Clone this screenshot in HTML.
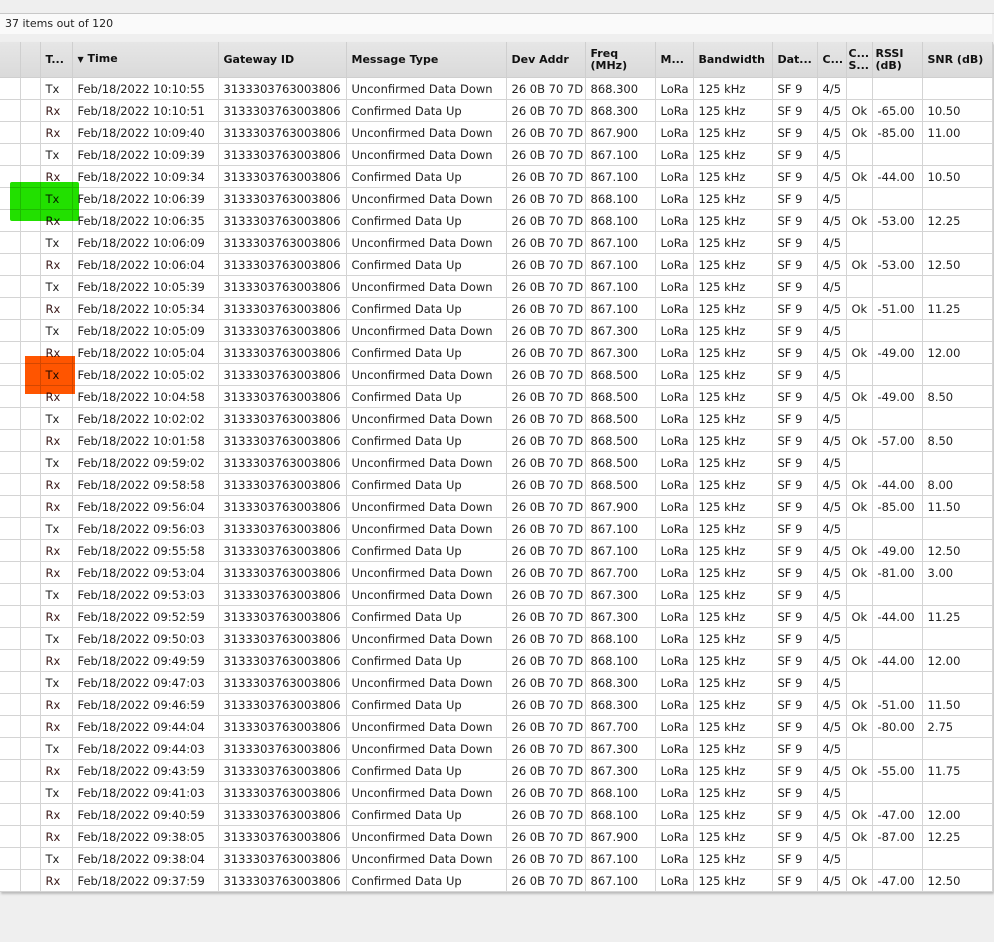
<!DOCTYPE html>
<html><head><meta charset="utf-8"><style>
html,body{margin:0;padding:0;background:#efefef;width:994px;height:942px;overflow:hidden;font-family:"DejaVu Sans","Liberation Sans",sans-serif;}
.top{position:absolute;left:0;top:0;width:994px;height:13px;background:#efefef;border-bottom:1px solid #c8c8c8;}
.status{position:absolute;left:0;top:14px;width:992px;height:20px;background:#fafafa;font-size:11px;line-height:20px;padding-left:5px;box-sizing:border-box;color:#222;}
table{position:absolute;left:0;top:42px;border-collapse:collapse;table-layout:fixed;width:992px;background:#fff;box-shadow:1px 2px 2px #bbb;font-size:11.5px;color:#222;}
th{height:35px;padding:0 5px;background:linear-gradient(#e6e6e6,#dadada);border:1px solid #cfcfcf;border-top:none;text-align:left;font-weight:bold;font-size:11px;line-height:12px;white-space:nowrap;overflow:hidden;color:#111;}
td{height:21px;padding:0 5px;border:1px solid #d4d4d4;white-space:nowrap;overflow:hidden;}
td:first-child,th:first-child{border-left:none}
.rx{color:#3a1a1a}
.hl{position:absolute;}
</style></head><body>
<div class="top"></div>
<div class="status">37 items out of 120</div>
<table>
<colgroup><col style="width:20px"><col style="width:20px"><col style="width:32px"><col style="width:146px"><col style="width:128px"><col style="width:160px"><col style="width:79px"><col style="width:70px"><col style="width:38px"><col style="width:79px"><col style="width:45px"><col style="width:29px"><col style="width:26px"><col style="width:50px"><col style="width:70px"></colgroup>
<tr><th></th><th></th><th>T...</th><th><span style="font-size:8px">&#9660;</span> Time</th><th>Gateway ID</th><th>Message Type</th><th>Dev Addr</th><th>Freq<br>(MHz)</th><th>M...</th><th>Bandwidth</th><th>Dat...</th><th>C...</th><th style="padding:0 2px">C...<br>S...</th><th style="padding:0 3px">RSSI<br>(dB)</th><th>SNR (dB)</th></tr>
<tbody id="b">
<tr><td></td><td></td><td>Tx</td><td>Feb/18/2022 10:10:55</td><td>3133303763003806</td><td>Unconfirmed Data Down</td><td>26 0B 70 7D</td><td>868.300</td><td>LoRa</td><td>125 kHz</td><td>SF 9</td><td>4/5</td><td></td><td></td><td></td></tr>
<tr><td></td><td></td><td class="rx">Rx</td><td>Feb/18/2022 10:10:51</td><td>3133303763003806</td><td>Confirmed Data Up</td><td>26 0B 70 7D</td><td>868.300</td><td>LoRa</td><td>125 kHz</td><td>SF 9</td><td>4/5</td><td>Ok</td><td>-65.00</td><td>10.50</td></tr>
<tr><td></td><td></td><td class="rx">Rx</td><td>Feb/18/2022 10:09:40</td><td>3133303763003806</td><td>Unconfirmed Data Down</td><td>26 0B 70 7D</td><td>867.900</td><td>LoRa</td><td>125 kHz</td><td>SF 9</td><td>4/5</td><td>Ok</td><td>-85.00</td><td>11.00</td></tr>
<tr><td></td><td></td><td>Tx</td><td>Feb/18/2022 10:09:39</td><td>3133303763003806</td><td>Unconfirmed Data Down</td><td>26 0B 70 7D</td><td>867.100</td><td>LoRa</td><td>125 kHz</td><td>SF 9</td><td>4/5</td><td></td><td></td><td></td></tr>
<tr><td></td><td></td><td class="rx">Rx</td><td>Feb/18/2022 10:09:34</td><td>3133303763003806</td><td>Confirmed Data Up</td><td>26 0B 70 7D</td><td>867.100</td><td>LoRa</td><td>125 kHz</td><td>SF 9</td><td>4/5</td><td>Ok</td><td>-44.00</td><td>10.50</td></tr>
<tr><td></td><td></td><td>Tx</td><td>Feb/18/2022 10:06:39</td><td>3133303763003806</td><td>Unconfirmed Data Down</td><td>26 0B 70 7D</td><td>868.100</td><td>LoRa</td><td>125 kHz</td><td>SF 9</td><td>4/5</td><td></td><td></td><td></td></tr>
<tr><td></td><td></td><td class="rx">Rx</td><td>Feb/18/2022 10:06:35</td><td>3133303763003806</td><td>Confirmed Data Up</td><td>26 0B 70 7D</td><td>868.100</td><td>LoRa</td><td>125 kHz</td><td>SF 9</td><td>4/5</td><td>Ok</td><td>-53.00</td><td>12.25</td></tr>
<tr><td></td><td></td><td>Tx</td><td>Feb/18/2022 10:06:09</td><td>3133303763003806</td><td>Unconfirmed Data Down</td><td>26 0B 70 7D</td><td>867.100</td><td>LoRa</td><td>125 kHz</td><td>SF 9</td><td>4/5</td><td></td><td></td><td></td></tr>
<tr><td></td><td></td><td class="rx">Rx</td><td>Feb/18/2022 10:06:04</td><td>3133303763003806</td><td>Confirmed Data Up</td><td>26 0B 70 7D</td><td>867.100</td><td>LoRa</td><td>125 kHz</td><td>SF 9</td><td>4/5</td><td>Ok</td><td>-53.00</td><td>12.50</td></tr>
<tr><td></td><td></td><td>Tx</td><td>Feb/18/2022 10:05:39</td><td>3133303763003806</td><td>Unconfirmed Data Down</td><td>26 0B 70 7D</td><td>867.100</td><td>LoRa</td><td>125 kHz</td><td>SF 9</td><td>4/5</td><td></td><td></td><td></td></tr>
<tr><td></td><td></td><td class="rx">Rx</td><td>Feb/18/2022 10:05:34</td><td>3133303763003806</td><td>Confirmed Data Up</td><td>26 0B 70 7D</td><td>867.100</td><td>LoRa</td><td>125 kHz</td><td>SF 9</td><td>4/5</td><td>Ok</td><td>-51.00</td><td>11.25</td></tr>
<tr><td></td><td></td><td>Tx</td><td>Feb/18/2022 10:05:09</td><td>3133303763003806</td><td>Unconfirmed Data Down</td><td>26 0B 70 7D</td><td>867.300</td><td>LoRa</td><td>125 kHz</td><td>SF 9</td><td>4/5</td><td></td><td></td><td></td></tr>
<tr><td></td><td></td><td class="rx">Rx</td><td>Feb/18/2022 10:05:04</td><td>3133303763003806</td><td>Confirmed Data Up</td><td>26 0B 70 7D</td><td>867.300</td><td>LoRa</td><td>125 kHz</td><td>SF 9</td><td>4/5</td><td>Ok</td><td>-49.00</td><td>12.00</td></tr>
<tr><td></td><td></td><td>Tx</td><td>Feb/18/2022 10:05:02</td><td>3133303763003806</td><td>Unconfirmed Data Down</td><td>26 0B 70 7D</td><td>868.500</td><td>LoRa</td><td>125 kHz</td><td>SF 9</td><td>4/5</td><td></td><td></td><td></td></tr>
<tr><td></td><td></td><td class="rx">Rx</td><td>Feb/18/2022 10:04:58</td><td>3133303763003806</td><td>Confirmed Data Up</td><td>26 0B 70 7D</td><td>868.500</td><td>LoRa</td><td>125 kHz</td><td>SF 9</td><td>4/5</td><td>Ok</td><td>-49.00</td><td>8.50</td></tr>
<tr><td></td><td></td><td>Tx</td><td>Feb/18/2022 10:02:02</td><td>3133303763003806</td><td>Unconfirmed Data Down</td><td>26 0B 70 7D</td><td>868.500</td><td>LoRa</td><td>125 kHz</td><td>SF 9</td><td>4/5</td><td></td><td></td><td></td></tr>
<tr><td></td><td></td><td class="rx">Rx</td><td>Feb/18/2022 10:01:58</td><td>3133303763003806</td><td>Confirmed Data Up</td><td>26 0B 70 7D</td><td>868.500</td><td>LoRa</td><td>125 kHz</td><td>SF 9</td><td>4/5</td><td>Ok</td><td>-57.00</td><td>8.50</td></tr>
<tr><td></td><td></td><td>Tx</td><td>Feb/18/2022 09:59:02</td><td>3133303763003806</td><td>Unconfirmed Data Down</td><td>26 0B 70 7D</td><td>868.500</td><td>LoRa</td><td>125 kHz</td><td>SF 9</td><td>4/5</td><td></td><td></td><td></td></tr>
<tr><td></td><td></td><td class="rx">Rx</td><td>Feb/18/2022 09:58:58</td><td>3133303763003806</td><td>Confirmed Data Up</td><td>26 0B 70 7D</td><td>868.500</td><td>LoRa</td><td>125 kHz</td><td>SF 9</td><td>4/5</td><td>Ok</td><td>-44.00</td><td>8.00</td></tr>
<tr><td></td><td></td><td class="rx">Rx</td><td>Feb/18/2022 09:56:04</td><td>3133303763003806</td><td>Unconfirmed Data Down</td><td>26 0B 70 7D</td><td>867.900</td><td>LoRa</td><td>125 kHz</td><td>SF 9</td><td>4/5</td><td>Ok</td><td>-85.00</td><td>11.50</td></tr>
<tr><td></td><td></td><td>Tx</td><td>Feb/18/2022 09:56:03</td><td>3133303763003806</td><td>Unconfirmed Data Down</td><td>26 0B 70 7D</td><td>867.100</td><td>LoRa</td><td>125 kHz</td><td>SF 9</td><td>4/5</td><td></td><td></td><td></td></tr>
<tr><td></td><td></td><td class="rx">Rx</td><td>Feb/18/2022 09:55:58</td><td>3133303763003806</td><td>Confirmed Data Up</td><td>26 0B 70 7D</td><td>867.100</td><td>LoRa</td><td>125 kHz</td><td>SF 9</td><td>4/5</td><td>Ok</td><td>-49.00</td><td>12.50</td></tr>
<tr><td></td><td></td><td class="rx">Rx</td><td>Feb/18/2022 09:53:04</td><td>3133303763003806</td><td>Unconfirmed Data Down</td><td>26 0B 70 7D</td><td>867.700</td><td>LoRa</td><td>125 kHz</td><td>SF 9</td><td>4/5</td><td>Ok</td><td>-81.00</td><td>3.00</td></tr>
<tr><td></td><td></td><td>Tx</td><td>Feb/18/2022 09:53:03</td><td>3133303763003806</td><td>Unconfirmed Data Down</td><td>26 0B 70 7D</td><td>867.300</td><td>LoRa</td><td>125 kHz</td><td>SF 9</td><td>4/5</td><td></td><td></td><td></td></tr>
<tr><td></td><td></td><td class="rx">Rx</td><td>Feb/18/2022 09:52:59</td><td>3133303763003806</td><td>Confirmed Data Up</td><td>26 0B 70 7D</td><td>867.300</td><td>LoRa</td><td>125 kHz</td><td>SF 9</td><td>4/5</td><td>Ok</td><td>-44.00</td><td>11.25</td></tr>
<tr><td></td><td></td><td>Tx</td><td>Feb/18/2022 09:50:03</td><td>3133303763003806</td><td>Unconfirmed Data Down</td><td>26 0B 70 7D</td><td>868.100</td><td>LoRa</td><td>125 kHz</td><td>SF 9</td><td>4/5</td><td></td><td></td><td></td></tr>
<tr><td></td><td></td><td class="rx">Rx</td><td>Feb/18/2022 09:49:59</td><td>3133303763003806</td><td>Confirmed Data Up</td><td>26 0B 70 7D</td><td>868.100</td><td>LoRa</td><td>125 kHz</td><td>SF 9</td><td>4/5</td><td>Ok</td><td>-44.00</td><td>12.00</td></tr>
<tr><td></td><td></td><td>Tx</td><td>Feb/18/2022 09:47:03</td><td>3133303763003806</td><td>Unconfirmed Data Down</td><td>26 0B 70 7D</td><td>868.300</td><td>LoRa</td><td>125 kHz</td><td>SF 9</td><td>4/5</td><td></td><td></td><td></td></tr>
<tr><td></td><td></td><td class="rx">Rx</td><td>Feb/18/2022 09:46:59</td><td>3133303763003806</td><td>Confirmed Data Up</td><td>26 0B 70 7D</td><td>868.300</td><td>LoRa</td><td>125 kHz</td><td>SF 9</td><td>4/5</td><td>Ok</td><td>-51.00</td><td>11.50</td></tr>
<tr><td></td><td></td><td class="rx">Rx</td><td>Feb/18/2022 09:44:04</td><td>3133303763003806</td><td>Unconfirmed Data Down</td><td>26 0B 70 7D</td><td>867.700</td><td>LoRa</td><td>125 kHz</td><td>SF 9</td><td>4/5</td><td>Ok</td><td>-80.00</td><td>2.75</td></tr>
<tr><td></td><td></td><td>Tx</td><td>Feb/18/2022 09:44:03</td><td>3133303763003806</td><td>Unconfirmed Data Down</td><td>26 0B 70 7D</td><td>867.300</td><td>LoRa</td><td>125 kHz</td><td>SF 9</td><td>4/5</td><td></td><td></td><td></td></tr>
<tr><td></td><td></td><td class="rx">Rx</td><td>Feb/18/2022 09:43:59</td><td>3133303763003806</td><td>Confirmed Data Up</td><td>26 0B 70 7D</td><td>867.300</td><td>LoRa</td><td>125 kHz</td><td>SF 9</td><td>4/5</td><td>Ok</td><td>-55.00</td><td>11.75</td></tr>
<tr><td></td><td></td><td>Tx</td><td>Feb/18/2022 09:41:03</td><td>3133303763003806</td><td>Unconfirmed Data Down</td><td>26 0B 70 7D</td><td>868.100</td><td>LoRa</td><td>125 kHz</td><td>SF 9</td><td>4/5</td><td></td><td></td><td></td></tr>
<tr><td></td><td></td><td class="rx">Rx</td><td>Feb/18/2022 09:40:59</td><td>3133303763003806</td><td>Confirmed Data Up</td><td>26 0B 70 7D</td><td>868.100</td><td>LoRa</td><td>125 kHz</td><td>SF 9</td><td>4/5</td><td>Ok</td><td>-47.00</td><td>12.00</td></tr>
<tr><td></td><td></td><td class="rx">Rx</td><td>Feb/18/2022 09:38:05</td><td>3133303763003806</td><td>Unconfirmed Data Down</td><td>26 0B 70 7D</td><td>867.900</td><td>LoRa</td><td>125 kHz</td><td>SF 9</td><td>4/5</td><td>Ok</td><td>-87.00</td><td>12.25</td></tr>
<tr><td></td><td></td><td>Tx</td><td>Feb/18/2022 09:38:04</td><td>3133303763003806</td><td>Unconfirmed Data Down</td><td>26 0B 70 7D</td><td>867.100</td><td>LoRa</td><td>125 kHz</td><td>SF 9</td><td>4/5</td><td></td><td></td><td></td></tr>
<tr><td></td><td></td><td class="rx">Rx</td><td>Feb/18/2022 09:37:59</td><td>3133303763003806</td><td>Confirmed Data Up</td><td>26 0B 70 7D</td><td>867.100</td><td>LoRa</td><td>125 kHz</td><td>SF 9</td><td>4/5</td><td>Ok</td><td>-47.00</td><td>12.50</td></tr>
</tbody></table>
<div class="hl" style="left:10px;top:182px;width:69px;height:39px;background:#22e000;mix-blend-mode:multiply;border-radius:2px"></div>
<div class="hl" style="left:25px;top:356px;width:50px;height:38px;background:#ff5500;mix-blend-mode:multiply"></div>
</body></html>
